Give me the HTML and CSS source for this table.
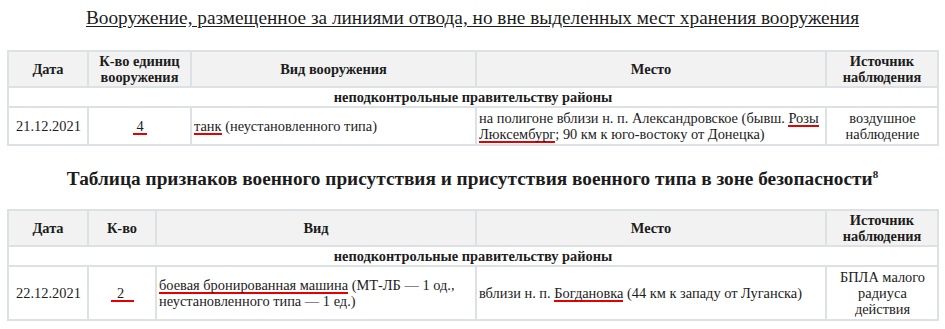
FILE: index.html
```html
<!DOCTYPE html>
<html lang="ru">
<head>
<meta charset="utf-8">
<title>Вооружение</title>
<link rel="stylesheet" href="styles.css">
</head>
<body>
<div class="page">
  <div class="title title-one"><span class="u">Вооружение, размещенное за линиями отвода, но вне выделенных мест хранения вооружения</span></div>
  <table class="grid grid-one">
    <colgroup>
      <col class="c-date"><col class="c-qty1"><col class="c-kind1"><col class="c-place"><col class="c-src">
    </colgroup>
    <thead>
      <tr class="head">
        <th>Дата</th>
        <th>К-во единиц вооружения</th>
        <th>Вид вооружения</th>
        <th>Место</th>
        <th>Источник наблюдения</th>
      </tr>
    </thead>
    <tbody>
      <tr class="sub"><th colspan="5">неподконтрольные правительству районы</th></tr>
      <tr class="data">
        <td class="ctr">21.12.2021</td>
        <td class="ctr"><span class="err pad">4</span></td>
        <td><span class="err">танк</span> (неустановленного типа)</td>
        <td>на полигоне вблизи н. п. Александровское (бывш. <span class="err">Розы</span> <span class="err">Люксембург</span>; 90 км к юго-востоку от Донецка)</td>
        <td class="ctr">воздушное наблюдение</td>
      </tr>
    </tbody>
  </table>

  <div class="title title-two">Таблица признаков военного присутствия и присутствия военного типа в зоне безопасности<sup>8</sup></div>
  <table class="grid grid-two">
    <colgroup>
      <col class="c-date"><col class="c-qty2"><col class="c-kind2"><col class="c-place"><col class="c-src">
    </colgroup>
    <thead>
      <tr class="head">
        <th>Дата</th>
        <th>К-во</th>
        <th>Вид</th>
        <th>Место</th>
        <th>Источник наблюдения</th>
      </tr>
    </thead>
    <tbody>
      <tr class="sub"><th colspan="5">неподконтрольные правительству районы</th></tr>
      <tr class="data">
        <td class="ctr">22.12.2021</td>
        <td class="ctr"><span class="err pad2">2</span></td>
        <td><span class="err">боевая бронированная машина</span> (МТ-ЛБ — 1 од., неустановленного типа — 1 ед.)</td>
        <td>вблизи н. п. <span class="err">Богдановка</span> (44 км к западу от Луганска)</td>
        <td class="ctr">БПЛА малого радиуса действия</td>
      </tr>
    </tbody>
  </table>
</div>
</body>
</html>
```
FILE: styles.css
```css
html, body {
  margin: 0;
  padding: 0;
  background: #ffffff;
}
body {
  font-family: "Liberation Serif", "Times New Roman", serif;
  color: #1c1c1c;
  font-size: 14.4px;
}
.page {
  padding: 0 7px;
}
.title {
  text-align: center;
  line-height: 22px;
}
.title-one {
  padding-top: 7px;
  font-size: 19.3px;
}
.title-one .u {
  text-decoration: underline;
  text-underline-offset: 2px;
}
.title-two {
  margin-top: 22px;
  font-size: 19.3px;
  font-weight: bold;
}
.title-two sup {
  font-size: 11px;
  line-height: 0;
  vertical-align: 7px;
}
.grid {
  width: 931px;
  table-layout: fixed;
  border-collapse: collapse;
  line-height: 16px;
  font-size: 14.4px;
}
.grid-one {
  margin-top: 21px;
}
.grid-two {
  margin-top: 19px;
}
.grid th, .grid td {
  border: 2px solid #dce1e4;
  vertical-align: middle;
  padding: 1px 2px;
}
.c-date { width: 80px; }
.c-qty1 { width: 103px; }
.c-kind1 { width: 285px; }
.c-qty2 { width: 68px; }
.c-kind2 { width: 320px; }
.c-place { width: 350px; }
.c-src { width: 112px; }
.head th {
  background: #f2f2f2;
  font-weight: bold;
  text-align: center;
}
.sub th {
  background: #ffffff;
  font-weight: bold;
  text-align: center;
}
.data td {
  padding: 2px 1px 2px 2px;
  text-align: left;
}
.data td.ctr {
  text-align: center;
}
.err {
  background: linear-gradient(#e60000, #e60000) left bottom / 100% 2px no-repeat;
  padding-bottom: 1px;
}
.err.pad {
  padding-left: 3px;
  padding-right: 3px;
}
.err.pad2 {
  padding-left: 6px;
  padding-right: 10px;
}
```
